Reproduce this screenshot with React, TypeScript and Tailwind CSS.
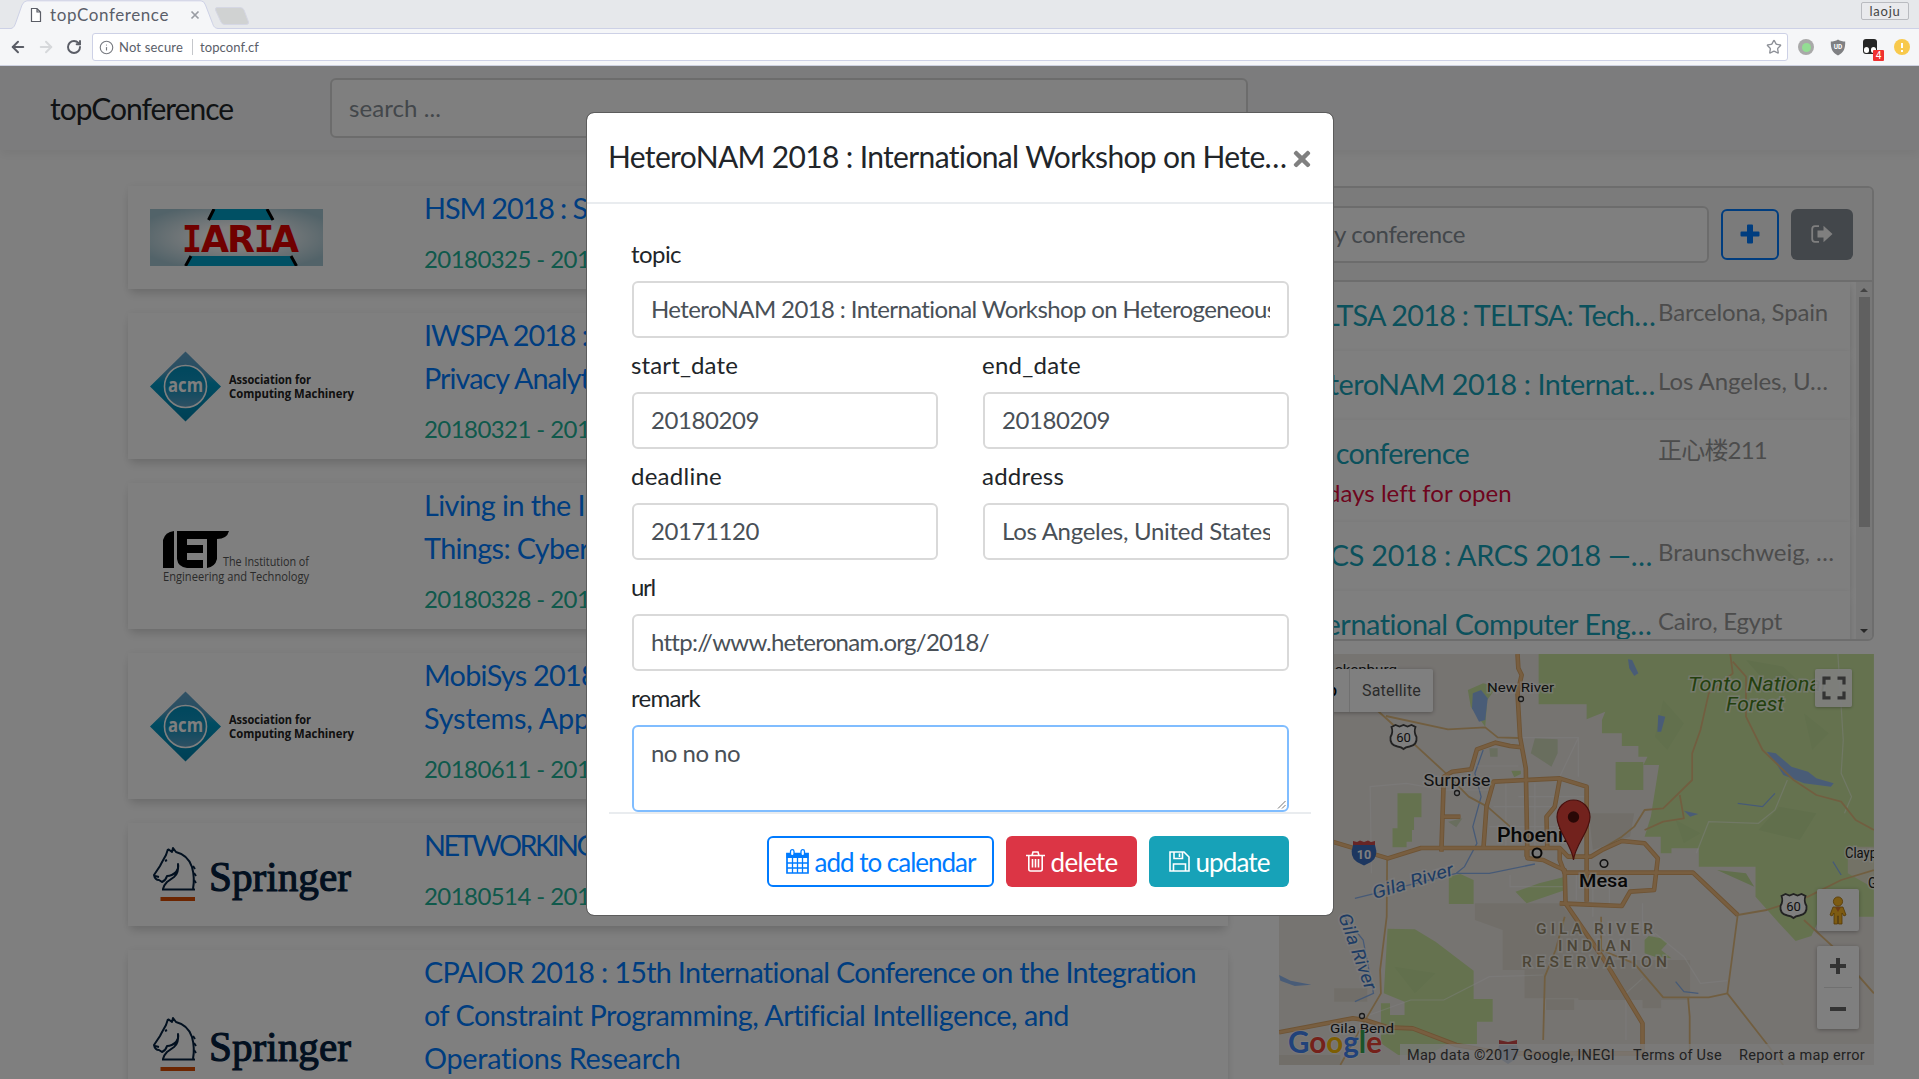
import { useLayoutEffect, useRef, useState, type ReactNode } from "react";
import { FaTimes } from "react-icons/fa";
import { ArrowLeft, ArrowRight, RotateCw, Star, Info } from "lucide-react";

/** One line of text whose letter spacing is adjusted to span a given width. */
function Fit({ w, children, className = "" }: { w: number; children: string; className?: string }) {
  const ref = useRef<HTMLSpanElement>(null);
  const [spacing, setSpacing] = useState(0);
  useLayoutEffect(() => {
    if (!ref.current) return;
    const natural = ref.current.getBoundingClientRect().width;
    setSpacing((w - natural) / children.length);
  }, [w, children]);
  return (
    <span ref={ref} className={"inline-block whitespace-pre " + className} style={{ letterSpacing: spacing }}>
      {children}
    </span>
  );
}

/* ---------- Browser chrome ---------- */

function TabStrip() {
  return (
    <div className="relative flex h-[29px] items-start border-b border-[#cdd1e6] bg-[#e6e8eb]">
      <svg className="absolute left-0 top-0" width="260" height="29" viewBox="0 0 260 29">
        <path d="M11 28.5 C14 28 15 25 16 22 L22 5 Q24 0.8 27 0.8 H201 Q204 0.8 205.500 5 L212 22 C213.500 26 214 28 218 28.5 V29 H11Z" fill="#f5f6f8" />
        <path d="M11 28.500 C14 28 15 25 16 22 L22 5 Q24 0.8 27 0.8 H201 Q204 0.8 205.500 5 L212 22 C213.500 26 214 28 218 28.5" fill="none" stroke="#cdd1e6" />
        <path d="M217 7.500 H240 Q243 7.500 244 10 L248.500 22 Q249 24.500 246 24.500 H225 Q222 24.500 221 22 L215.500 10 Q215 7.500 217 7.500Z" fill="#d0d2d2" stroke="#d5d7e4" />
        <path d="M31.500 8.500 H37 L40.500 12 V21.500 H31.500Z M37 8.500 V12 H40.500" fill="#fff" stroke="#5a5d66" strokeWidth="1.200" />
        <path d="M191.500 11.500 L198.500 18.500 M198.500 11.500 L191.500 18.500" stroke="#999ca3" strokeWidth="1.700" />
      </svg>
      <div className="relative ml-[50px] mt-[4px] text-[17px] leading-[22px] text-[#5a5e69]">
        <Fit w={119}>topConference</Fit>
      </div>
      <div className="ml-auto mr-[10px] mt-[2px] flex h-[18px] w-[48px] items-center justify-center rounded-[2px] border border-[#b9bbc0] bg-[#e9eaed] pt-px text-[13px] leading-none text-[#444]">
        <Fit w={31}>laoju</Fit>
      </div>
    </div>
  );
}

function Toolbar() {
  return (
    <div className="flex h-[37px] items-center border-b border-[#cdd1e0] bg-[#f5f6f8] pl-[9px]">
      <ArrowLeft size={18} strokeWidth={2.600} color="#5a5d66" />
      <ArrowRight size={18} strokeWidth={2.600} color="#d6d8db" className="ml-[10px]" />
      <RotateCw size={16} strokeWidth={2.900} color="#5a5d66" className="ml-[11px]" />
      <div className="ml-[10px] flex h-[28px] w-[1696px] items-center rounded-[3px] border border-[#cdd1e6] bg-white pl-[6px] text-[13px] text-[#5a5e69]">
        <Info size={15} strokeWidth={1.800} color="#777a80" />
        <Fit w={64} className="ml-[5px] mt-px">Not secure</Fit>
        <span className="ml-[9px] mr-[7px] h-[16px] w-px bg-[#c5c7cb]" />
        <Fit w={59} className="mt-px">topconf.cf</Fit>
        <Star size={16} strokeWidth={2} color="#8d9097" className="ml-auto mr-[5px]" />
      </div>
      <div className="ml-[10px] flex h-[16px] w-[16px] items-center justify-center rounded-full bg-[#a9a9a9]">
        <div className="h-[9px] w-[9px] rounded-full bg-[#93dd93]" />
      </div>
      <svg className="ml-[16px]" width="16" height="17" viewBox="0 0 16 17">
        <path d="M8 0.500 C10 2 13 2.600 15.200 2.600 C15.400 9 14 14 8 16.500 C2 14 0.600 9 0.800 2.600 C3 2.600 6 2 8 0.500Z" fill="#7f8083" />
        <text x="8" y="10" fontSize="6.500" fontWeight="700" fill="#fff" textAnchor="middle" fontFamily="Roboto">UD</text>
      </svg>
      <div className="relative ml-[16px] h-[16px] w-[16px]">
        <div className="ml-[1px] h-[15px] w-[14px] rounded-[3px] bg-[#262626]" />
        <div className="absolute left-[2px] top-[8px] h-[6px] w-[5px] rounded-full bg-white" />
        <div className="absolute left-[9px] top-[8px] h-[6px] w-[5px] rounded-full bg-white" />
        <div className="absolute left-[11px] top-[11px] flex h-[11px] w-[11px] items-center justify-center rounded-[1px] bg-[#f03030] font-[Roboto] text-[10px] leading-none text-white">4</div>
      </div>
      <div className="ml-[16px] flex h-[16px] w-[16px] flex-col items-center justify-center gap-[2px] rounded-full bg-[#f8c94c]">
        <div className="h-[5px] w-[2px] bg-white" />
        <div className="h-[2px] w-[2px] bg-white" />
      </div>
    </div>
  );
}

/* ---------- Publisher logos ---------- */

function IariaLogo() {
  return (
    <svg width="173" height="57" viewBox="0 0 173 57">
      <defs>
        <radialGradient id="iaria" cx="50%" cy="50%" r="60%">
          <stop offset="0.300" stopColor="#fff" />
          <stop offset="1" stopColor="#a5c6d2" />
        </radialGradient>
      </defs>
      <rect width="173" height="57" fill="url(#iaria)" />
      <path d="M64 0 H118 L124 11 H58Z" fill="#00a0c8" />
      <path d="M64 0 L58.500 11 M117 0 L123 11" stroke="#000" strokeWidth="3" />
      <path d="M42 47 H140 L146 57 H36Z" fill="#00a0c8" />
      <path d="M41 47 L35.500 57 M141 47 L146.500 57" stroke="#000" strokeWidth="3" />
      <g fontFamily="DejaVu Sans, sans-serif" fontWeight="700" fontSize="37" fill="#e00000">
        <text x="32" y="43" fontFamily="DejaVu Sans Mono, monospace" textLength="20" lengthAdjust="spacingAndGlyphs">I</text>
        <text x="51" y="43" textLength="28" lengthAdjust="spacingAndGlyphs">A</text>
        <text x="77" y="43" textLength="28" lengthAdjust="spacingAndGlyphs">R</text>
        <text x="104" y="43" fontFamily="DejaVu Sans Mono, monospace" textLength="20" lengthAdjust="spacingAndGlyphs">I</text>
        <text x="121" y="43" textLength="28" lengthAdjust="spacingAndGlyphs">A</text>
      </g>
    </svg>
  );
}

function AcmLogo() {
  return (
    <svg width="205" height="71" viewBox="0 0 205 71">
      <defs>
        <linearGradient id="acm" x1="0" y1="0" x2="0" y2="1">
          <stop offset="0" stopColor="#62a3ca" />
          <stop offset="0.300" stopColor="#4f9cc4" />
          <stop offset="0.450" stopColor="#0098c4" />
          <stop offset="1" stopColor="#0080aa" />
        </linearGradient>
        <linearGradient id="acmc" x1="0" y1="0" x2="0" y2="1">
          <stop offset="0" stopColor="#008fbc" />
          <stop offset="0.500" stopColor="#1294c0" />
          <stop offset="1" stopColor="#60a2c8" />
        </linearGradient>
      </defs>
      <path d="M35.500 0.500 L71 35.500 L35.500 70.500 L0 35.500Z" fill="url(#acm)" />
      <circle cx="35.500" cy="35.500" r="21" fill="url(#acmc)" stroke="#fff" strokeWidth="1.600" />
      <text x="18" y="40.500" fontFamily="Open Sans, sans-serif" fontWeight="700" fontSize="19" textLength="35" lengthAdjust="spacingAndGlyphs" fill="#fff">acm</text>
      <g fontFamily="Open Sans, sans-serif" fontWeight="700" fontSize="12.500" fill="#222">
        <text x="79" y="32.500" textLength="82" lengthAdjust="spacingAndGlyphs">Association for</text>
        <text x="79" y="47" textLength="125" lengthAdjust="spacingAndGlyphs">Computing Machinery</text>
      </g>
    </svg>
  );
}

function IetLogo() {
  return (
    <svg width="173" height="57" viewBox="0 0 173 57">
      <path d="M13 40 V12 Q15 4 24 3 V40Z" fill="#000" />
      <path d="M27 3 H79 Q77 11 67 11 V31 Q65 39 57 40 V11 H37 V17 H53 V25 H37 V32 H53 V40 H37 Q28 39 27 31Z" fill="#000" />
      <g fontFamily="Open Sans, sans-serif" fontSize="12" fill="#555">
        <text x="73" y="38" textLength="86" lengthAdjust="spacingAndGlyphs">The Institution of</text>
        <text x="13" y="53" textLength="146" lengthAdjust="spacingAndGlyphs">Engineering and Technology</text>
      </g>
    </svg>
  );
}

function SpringerLogo() {
  return (
    <svg width="205" height="58" viewBox="0 0 205 58">
      <g fill="none" stroke="#04203f" strokeWidth="2" strokeLinejoin="round">
        <path d="M18 3 L16 9 Q12 16 10 20 L4 29 Q5 34 9 34 L12 36 Q16 34 17 30 Q22 30 26 26 Q29 22 28 18 Q29 27 24 31 L17 36 Q14 39 13 43 M18 3 L22 6 L23 2 L26 6 Q38 9 42 21 Q45 32 43 43" />
        <path d="M12 43.500 H45" />
        <path d="M5 30 L9 31 M15 15 L17 14" />
      </g>
      <path d="M43 20 L45 23 M44 27 L46 30 M44 34 L46 37" stroke="#04203f" strokeWidth="2" />
      <rect x="10.500" y="51" width="34.500" height="4" fill="#d84a00" />
      <text x="59" y="44.500" fontFamily="Liberation Serif, serif" fontSize="43" textLength="142" lengthAdjust="spacingAndGlyphs" fill="#04203f" stroke="#04203f" strokeWidth="1.100">Springer</text>
    </svg>
  );
}

/* ---------- Conference list ---------- */

type Line = [text: string, width: number];

function ConferenceCard({ logo, lines, date }: { logo: ReactNode; lines: Line[]; date: string }) {
  return (
    <article className="flex shrink-0 bg-white pb-[12px] shadow-[0_7px_9px_-2px_rgba(0,0,0,0.13),0_0_8px_rgba(0,0,0,0.06)]">
      <div className="flex w-[296px] items-center pl-[22px] pt-[12px]">{logo}</div>
      <div>
        <h2 className="pt-px text-[28.800px] leading-[43px] text-[#007bff]">
          {lines.map(([text, width]) => (
            <div key={text} className="h-[43px]">
              <Fit w={width}>{text}</Fit>
            </div>
          ))}
        </h2>
        <p className="mt-[11px] text-[24px] leading-[36px] text-[#20b297]">
          <Fit w={233}>{date}</Fit>
        </p>
      </div>
    </article>
  );
}

function ConferenceList() {
  return (
    <div className="flex w-[1100px] flex-col gap-6">
      <ConferenceCard logo={<IariaLogo />} lines={[["HSM 2018 : S", 163]]} date="20180325 - 20180329" />
      <ConferenceCard logo={<AcmLogo />} lines={[["IWSPA 2018 :", 164], ["Privacy Analyt", 166]]} date="20180321 - 20180321" />
      <ConferenceCard logo={<IetLogo />} lines={[["Living in the I", 161], ["Things: Cyber", 165]]} date="20180328 - 20180329" />
      <ConferenceCard logo={<AcmLogo />} lines={[["MobiSys 2018", 173], ["Systems, App", 166]]} date="20180611 - 20180615" />
      <ConferenceCard logo={<SpringerLogo />} lines={[["NETWORKING", 171]]} date="20180514 - 20180516" />
      <ConferenceCard
        logo={<SpringerLogo />}
        lines={[
          ["CPAIOR 2018 : 15th International Conference on the Integration", 773],
          ["of Constraint Programming, Artificial Intelligence, and", 645],
          ["Operations Research", 257],
        ]}
        date="20180626 - 20180629"
      />
    </div>
  );
}

/* ---------- My conferences ---------- */

function MyItem({ title, place, note, height }: { title: Line; place: Line; note?: Line; height: string }) {
  return (
    <li className={"flex w-[569px] shrink-0 bg-white pl-[12px] pt-[12px] shadow-[0_5px_8px_-1px_rgba(0,0,0,0.14),0_0_6px_rgba(0,0,0,0.05)] " + height}>
      <div className="w-[365px]">
        <div className="text-[28.800px] leading-[43px] text-[#17a2b8]">
          <Fit w={title[1]}>{title[0]}</Fit>
        </div>
        {note && (
          <div className="text-[24px] leading-[36px] text-[#dc0a3c]">
            <Fit w={note[1]}>{note[0]}</Fit>
          </div>
        )}
      </div>
      <div className="text-[24px] leading-[36px] text-[#999]">
        <Fit w={place[1]}>{place[0]}</Fit>
      </div>
    </li>
  );
}

function MyConferences() {
  return (
    <section className="flex h-[455px] flex-col overflow-hidden rounded-[6px] border-2 border-[#dadada] bg-white">
      <div className="flex h-[94px] shrink-0 items-center gap-3 border-b-2 border-[#dadada] bg-[#f7f7f7] px-[19px]">
        <div className="flex h-[57px] flex-1 items-center rounded-[6px] border-2 border-[#d9d9d9] bg-white pl-[13px] text-[24px] text-[#868e96]">
          <Fit w={150}>my conference</Fit>
        </div>
        <button className="flex h-[51px] w-[58px] items-center justify-center rounded-[6px] border-2 border-[#007bff] text-[#007bff]">
          <svg width="20" height="20" viewBox="0 0 20 20">
            <path d="M8 0.500 H12 Q13 0.500 13 1.500 V7.500 H18.500 Q19.500 7.500 19.500 8.500 V11.500 Q19.500 12.500 18.500 12.500 H13 V18.500 Q13 19.500 12 19.500 H8 Q7 19.500 7 18.500 V12.500 H1.500 Q0.500 12.500 0.500 11.500 V8.500 Q0.500 7.500 1.500 7.500 H7 V1.500 Q7 0.500 8 0.500Z" fill="currentColor" />
          </svg>
        </button>
        <button className="flex h-[51px] w-[62px] items-center justify-center rounded-[6px] bg-[#868e96] text-white">
          <svg width="22" height="18" viewBox="0 0 22 18">
            <path d="M8 1.200 H4 Q1.200 1.200 1.200 4 V14 Q1.200 16.800 4 16.800 H8" fill="none" stroke="currentColor" strokeWidth="1.800" />
            <path d="M12.500 0.800 L21.500 9 L12.500 17.200 V12.500 H6.500 V5.500 H12.500Z" fill="currentColor" />
          </svg>
        </button>
      </div>
      <div className="flex flex-1 justify-between overflow-hidden">
        <ul className="flex flex-col">
          <MyItem height="h-[69px]" title={["TELTSA 2018 : TELTSA: Tech…", 362]} place={["Barcelona, Spain", 170]} />
          <MyItem height="h-[69px]" title={["HeteroNAM 2018 : Internat…", 362]} place={["Los Angeles, U…", 170]} />
          <MyItem height="h-[102px]" title={["my conference", 176]} note={["66 days left for open", 218]} place={["正心楼211", 109]} />
          <MyItem height="h-[69px]" title={["ARCS 2018 : ARCS 2018 —…", 359]} place={["Braunschweig, …", 176]} />
          <MyItem height="h-[69px]" title={["International Computer Eng…", 359]} place={["Cairo, Egypt", 124]} />
        </ul>
        <div className="flex w-[16px] flex-col items-center bg-[#f1f1f1]">
          <div className="mt-[6px] h-0 w-0 border-x-[4px] border-b-[4px] border-x-transparent border-b-[#888]" />
          <div className="mt-[5px] h-[230px] w-[11px] bg-[#c1c1c1]" />
          <div className="mb-[6px] mt-auto h-0 w-0 border-x-[4px] border-t-[4px] border-x-transparent border-t-[#505050]" />
        </div>
      </div>
    </section>
  );
}

/* ---------- Map ---------- */

const majorRoads = [
  "M598 42 L600 85 L608 105 L598 160 L604 290 L618 385 L622 655 L660 660 L690 678 L712 690 L714 790 L805 955 L900 1150 V1240",
  "M110 590 L285 655 L365 624 H700 L720 650 H775 L805 628 L850 603 L905 610 L937 655 L928 750 L870 755 L850 798 L700 790",
  "M608 322 L580 318 L545 308 L500 328 L486 388 L440 395 L420 410 L414 635",
  "M414 530 H460",
  "M516 620 L523 500 L540 425 L700 415 L765 440 V785",
  "M700 418 L688 500 L668 530 L670 625",
  "M620 650 V625",
  "M700 625 V660 L712 700",
  "M712 698 H1022 L1130 825",
  "M22 1177 L200 1135 L230 1140 L285 1162 L345 1165 L450 1215 L560 1240 H900",
];
const minorRoads = [
  "M150 90 L285 240 L425 400 L480 470 L525 500 L580 560",
  "M280 228 L430 268 L520 262 L550 292 L600 294",
  "M283 655 L282 830 L266 990 L268 1060 L235 1130 L170 1275",
  "M1112 42 L1118 100 L1060 160 L1040 270 L1020 340 V420 L950 505 L905 510 L880 560 L850 590 L800 628",
  "M1118 65 L1150 110 V230 L1190 330 L1265 420 L1320 465 L1380 485 L1415 540 L1459 570",
  "M1130 825 L1200 810 L1300 770 L1380 720 L1459 690",
  "M1130 825 L1105 1060 L1240 1275",
  "M712 830 L690 930 L664 1010 L660 1200",
  "M800 830 V930 L880 970 L950 1072 H1060 L1105 1060",
  "M1010 1072 L1014 1130 V1240",
  "M1290 840 L1360 920 L1459 1060",
  "M905 570 L950 545 L1000 535 L990 465",
];
const localRoads = [
  "M245 700 L242 440 L330 430 L420 450 H540",
  "M500 378 H600 M608 293 H745 V410 M745 293 L700 410 M640 430 V620 M570 425 V620 M540 500 H690 M530 560 H690 M600 470 H760",
  "M240 1125 L340 1080 L420 1080 L530 1010 L660 1005",
  "M1372 42 L1385 300 L1380 400 L1405 470 L1388 520",
  "M1250 420 L1220 510 L1180 550 L1060 545 L1030 640",
  "M580 705 V740 H710 M740 690 V780 M780 700 V830 M820 700 V790 M900 790 V880",
  "M930 880 L1000 950 L1040 1030 L1105 1022 M860 1200 V1060 L900 1015",
];

function Label({ x, y, size, w, children, weight = 400, fill = "#222", spread = false }: { x: number; y: number; size: number; w: number; children: string; weight?: number; fill?: string; spread?: boolean }) {
  return (
    <text x={x} y={y} fontSize={size} fontWeight={weight} textLength={w} lengthAdjust={spread ? "spacing" : "spacingAndGlyphs"} fill={fill} stroke="#fff" strokeOpacity="0.600" strokeWidth="3" paintOrder="stroke">
      {children}
    </text>
  );
}

function UsShield({ x, y }: { x: number; y: number }) {
  return (
    <g transform={`translate(${x} ${y})`}>
      <path d="M-12 -10 L-8 -12 L-4 -10.500 L0 -12 L4 -10.500 L8 -12 L12 -10 Q10 -5 13 0 Q14 8 6 9.500 Q2 10 0 12 Q-2 10 -6 9.500 Q-14 8 -13 0 Q-10 -5 -12 -10Z" fill="#fff" stroke="#444" strokeWidth="1.800" />
      <text y="4.500" fontSize="13" textAnchor="middle" fill="#222">60</text>
    </g>
  );
}

function MapDrawing() {
  return (
    <svg className="block" width="595" height="411" viewBox="1279 654 595 411" fontFamily="Roboto, sans-serif">
      <rect x="1279" y="654" width="595" height="411" fill="#ede8e3" />
      <g transform="translate(1270 640) scale(0.4139 0.33333)">
        <g fill="#e2ddd2">
          <path d="M495 790 H700 L830 960 H1015 V1080 H745 V1075 H615 V990 H562 V870 L495 840Z M770 520 L880 520 L870 590 L780 630Z" />
          <path d="M155 1045 H235 V1085 H155Z M22 1245 H170 V1275 H22Z M667 1078 H735 V1110 H667Z M900 1065 H945 V1105 H900Z" />
        </g>
        <g fill="#cae59f">
          <path d="M649 42 H1459 V830 H1330 L1308 888 L1270 903 L1230 850 L1173 770 V680 H1036 V625 H970 V640 H944 V590 H905 L920 530 L940 375 H902 L912 350 H890 V318 H850 V280 H802 V240 L810 215 L765 238 V193 H649Z" />
          <path d="M835 366 H902 V450 H835Z M308 460 H366 V532 H348 V570 H343 V605 H330 V622 H296 V565 H308Z" />
          <path d="M284 866 L350 868 L400 905 L492 992 V1077 H538 V1145 H500 V1212 H430 L380 1245 H310 L268 1210 V1090 H290 V1125 H325 V1085 L275 1060Z" />
          <path d="M432 710 L460 702 L492 720 V792 H432Z M593 755 L650 730 L708 712 V752 L620 790Z M583 392 H606 V402 L590 412Z" />
          <path d="M905 900 L915 888 L945 895 L960 910 L945 930 L970 955 L930 950 L905 940Z M478 150 L515 130 L548 140 L525 180 L520 260 L485 200Z" />
        </g>
        <path d="M1396 620 H1459 V745 L1396 700Z" fill="#e6e4cc" />
        <g fill="#d2dcbd">
          <path d="M640 295 L695 298 V340 L680 380 L630 340Z M530 325 H550 V350 H532Z M430 545 L465 535 L450 562Z" />
          <path d="M1150 60 L1240 80 L1300 150 L1200 130Z M1230 500 L1320 520 L1280 600 L1180 570Z M1080 690 L1150 700 L1170 740Z" fill="#c2de99" />
          <path d="M950 180 L1000 250 L960 330 L930 290Z M1290 220 L1350 280 L1310 330Z M980 540 L1040 580 L1000 610Z M300 980 L400 1000 L350 1060Z" fill="#c4e09a" />
        </g>
        <g fill="#93b9ef">
          <path d="M490 160 L510 150 L526 175 L520 240 L505 245 L488 205Z" />
          <path d="M1200 335 L1222 340 L1260 380 L1300 395 L1320 415 L1362 430 L1355 440 L1290 430 L1240 405 L1225 375Z" />
          <path d="M865 58 L875 60 L890 100 L880 108 L868 85Z M938 225 L955 230 L945 275 L936 275Z M22 1005 L50 1022 L100 1034 L60 1038 L25 1022Z M1000 512 L1035 522 L1015 530Z" />
        </g>
        <g fill="none" stroke="#8db4ee" strokeWidth="1.300">
          <path vectorEffect="non-scaling-stroke" d="M515 330 L495 400 L510 470 L490 560 L500 610 L470 680 L450 700 L205 775 M450 700 L530 700 L640 672 M1130 490 L1190 500 L1220 460 M180 830 L225 900 L250 1060 L205 1085 M980 1025 L1000 1055 L1035 1060 M1360 665 L1380 705" />
        </g>
        <g fill="none" stroke="#fff" strokeOpacity="0.450" strokeWidth="1.200">
          {localRoads.map((d) => <path key={d} d={d} vectorEffect="non-scaling-stroke" />)}
        </g>
        <g fill="none" strokeLinejoin="round">
          <g stroke="#e3bd80" strokeWidth="1.800">
            {minorRoads.map((d) => <path key={d} d={d} vectorEffect="non-scaling-stroke" />)}
          </g>
          <g stroke="#dca768" strokeWidth="4.600">
            {majorRoads.map((d) => <path key={d} d={d} vectorEffect="non-scaling-stroke" />)}
          </g>
          <g stroke="#f0bd80" strokeWidth="2.800">
            {majorRoads.map((d) => <path key={d} d={d} vectorEffect="non-scaling-stroke" />)}
          </g>
        </g>
      </g>

      <Label x={1331} y={674} size={13} w={66}>ickenburg</Label>
      <Label x={1487} y={692} size={13.500} w={67}>New River</Label>
      <Label x={1423.500} y={786} size={16} w={67}>Surprise</Label>
      <Label x={1497} y={842} size={21} w={77} weight={500} fill="#111">Phoenix</Label>
      <Label x={1579} y={887} size={18} w={49} weight={500} fill="#111">Mesa</Label>
      <Label x={1845} y={858} size={14} w={50}>Claypool</Label>
      <Label x={1868} y={888} size={14} w={35}>Globe</Label>
      <Label x={1330} y={1033} size={13} w={64}>Gila Bend</Label>
      <g fontStyle="italic" fontWeight="500">
        <Label x={1688} y={691} size={20} w={138} fill="#47801c">Tonto National</Label>
        <Label x={1726} y={711} size={20} w={58} fill="#47801c">Forest</Label>
      </g>
      <g fontWeight="500">
        <Label x={1536} y={934} size={15.500} w={117} weight={500} fill="#96896b" spread>GILA RIVER</Label>
        <Label x={1558} y={950.500} size={15.500} w={73} weight={500} fill="#96896b" spread>INDIAN</Label>
        <Label x={1522} y={967} size={15.500} w={145} weight={500} fill="#96896b" spread>RESERVATION</Label>
      </g>
      <g fontStyle="italic">
        <g transform="rotate(-17 1375 898)"><Label x={1374} y={899} size={18} w={84} fill="#3b78c9">Gila River</Label></g>
        <g transform="rotate(70 1340 915)"><Label x={1340} y={917} size={18} w={80} fill="#3b78c9">Gila River</Label></g>
      </g>
      <g fill="#eee" stroke="#333" strokeWidth="1.300">
        <circle cx="1521" cy="699" r="2.500" />
        <circle cx="1457" cy="793" r="2.500" />
        <circle cx="1362" cy="1016" r="2.500" />
        <circle cx="1537" cy="853" r="4.500" stroke="#111" strokeWidth="2" />
        <circle cx="1604" cy="863.500" r="3.800" stroke="#222" strokeWidth="1.600" />
      </g>
      <UsShield x={1403.500} y={737} />
      <UsShield x={1793.500} y={906} />
      <g>
        <path d="M1353 845 Q1349 857 1357 862 L1364 865.500 L1371 862 Q1379 857 1375 845Z" fill="#3b6fc0" />
        <path d="M1353 845 V841 L1357 842 L1360 840.500 L1364 842 L1368 840.500 L1371 842 L1375 841 V845Z" fill="#cf4a4a" />
        <text x="1364" y="859" fontSize="12.500" fontWeight="700" textAnchor="middle" fill="#fff">10</text>
      </g>
      <g>
        <path d="M1499 1045 Q1496 1056 1502 1060 L1508 1064 L1514 1060 Q1520 1056 1517 1045Z" fill="#6f8fc8" />
        <path d="M1499 1044 V1040 L1508 1042 L1517 1040 V1044Z" fill="#cf4a4a" />
      </g>
      <g>
        <path d="M1573.500 860 C1572 845 1557 831 1557 817 A16.500 17 0 0 1 1590 817 C1590 831 1575 845 1573.500 860Z" fill="#e5453b" stroke="#90201b" strokeWidth="1.200" />
        <ellipse cx="1573.500" cy="817" rx="5.700" ry="5.700" fill="#52100d" />
      </g>
      <text x="1288" y="1053" fontFamily="Lato, sans-serif" fontSize="31" textLength="94" lengthAdjust="spacingAndGlyphs" fontWeight="700" stroke="#fff" strokeOpacity="0.500" strokeWidth="2" paintOrder="stroke">
        <tspan fill="#4285f4">G</tspan>
        <tspan fill="#ea4335">o</tspan>
        <tspan fill="#fbbc05">o</tspan>
        <tspan fill="#4285f4">g</tspan>
        <tspan fill="#34a853">l</tspan>
        <tspan fill="#ea4335">e</tspan>
      </text>
    </svg>
  );
}

function MapPanel() {
  return (
    <section className="relative mt-[13px] h-[411px] w-[595px] overflow-hidden font-[Roboto]">
      <MapDrawing />
      <div className="absolute left-[15px] top-[15px] flex h-[43px] w-[139px] items-center rounded-[2px] bg-white text-[16px] text-[#565656] shadow-[0_1px_4px_rgba(0,0,0,0.3)]">
        <span className="flex h-full w-[56px] items-center justify-end border-r border-[#e0e0e0] pr-[12px] font-medium text-black">Map</span>
        <span className="pl-[12px]"><Fit w={59}>Satellite</Fit></span>
      </div>
      <div className="absolute right-[22px] top-[15px] flex h-[38px] w-[37px] items-center justify-center rounded-[2px] bg-white/90 shadow-[0_1px_3px_rgba(0,0,0,0.25)]">
        <svg width="24" height="24" viewBox="0 0 24 24" fill="none" stroke="#666" strokeWidth="3.200">
          <path d="M2 8.500 V2.200 H8.500 M15.500 2.200 H22 V8.500 M22 15.500 V21.800 H15.500 M8.500 21.800 H2 V15.500" />
        </svg>
      </div>
      <div className="absolute bottom-[134px] right-[15px] flex h-[42px] w-[42px] items-center justify-center rounded-[2px] bg-white shadow-[0_1px_4px_rgba(0,0,0,0.3)]">
        <svg width="18" height="29" viewBox="0 0 18 29">
          <path d="M4 11 H14 L17 19 L15 20 L13 17 V28 H9.500 V20 H8.500 V28 H5 V17 L3 20 L1 19Z" fill="#fbb724" stroke="#a8700a" strokeWidth="0.800" />
          <circle cx="9" cy="5.500" r="4.600" fill="#fbb724" stroke="#a8700a" strokeWidth="0.800" />
          <path d="M6 11 H12 L9 16Z" fill="#d9772a" />
        </svg>
      </div>
      <div className="absolute bottom-[36px] right-[15px] flex h-[83px] w-[42px] flex-col items-center justify-between rounded-[2px] bg-white py-[12px] shadow-[0_1px_4px_rgba(0,0,0,0.3)]">
        <svg width="16" height="16" viewBox="0 0 16 16"><path d="M6 0 H10 V6 H16 V10 H10 V16 H6 V10 H0 V6 H6Z" fill="#666" /></svg>
        <div className="h-px w-[28px] bg-[#e0e0e0]" />
        <svg width="16" height="16" viewBox="0 0 16 16"><path d="M0 6 H16 V10 H0Z" fill="#666" /></svg>
      </div>
      <div className="absolute bottom-0 right-0 flex h-[21px] w-[474px] items-center bg-[#f5f5f5]/75 pl-[7px] pt-[3px] text-[14.500px] leading-none text-[#444]">
        <Fit w={208}>Map data ©2017 Google, INEGI</Fit>
        <Fit w={89} className="ml-[18px]">Terms of Use</Fit>
        <Fit w={126} className="ml-[17px]">Report a map error</Fit>
      </div>
    </section>
  );
}

/* ---------- Edit dialog ---------- */

function Field({ label, labelWidth, value, valueWidth, className = "" }: { label: string; labelWidth: number; value: string; valueWidth: number; className?: string }) {
  return (
    <div className={"h-[111px] " + className}>
      <div className="-ml-px text-[24px] leading-[36px] text-[#212529]">
        <Fit w={labelWidth}>{label}</Fit>
      </div>
      <div className="mt-[9px] flex h-[57px] items-center rounded-[6px] border-2 border-[#d9d9d9] bg-white px-[17px] text-[24px] leading-[36px] text-[#495057]">
        <div className="-mt-px w-full overflow-hidden">
          <Fit w={valueWidth}>{value}</Fit>
        </div>
      </div>
    </div>
  );
}

function EditDialog() {
  return (
    <div className="absolute left-[586px] top-[46px] flex h-[804px] w-[748px] flex-col rounded-[8px] border border-[#5c5c5c] bg-white bg-clip-padding">
      <div className="flex h-[91px] shrink-0 items-center justify-between border-b-2 border-[#e9ecef] pl-[21px] pr-[22px]">
        <h1 className="-mt-[2px] text-[30px] leading-[45px] text-[#212529]">
          <Fit w={679}>HeteroNAM 2018 : International Workshop on Hete…</Fit>
        </h1>
        <FaTimes size={24} color="#808080" className="-mr-[3px] mt-[2px]" />
      </div>
      <div className="mt-[32px] grid grid-cols-2 gap-x-[45px] pl-[45px] pr-[44px]">
        <Field className="col-span-2" label="topic" labelWidth={50} value="HeteroNAM 2018 : International Workshop on Heterogeneous" valueWidth={626} />
        <Field label="start_date" labelWidth={107} value="20180209" valueWidth={108} />
        <Field label="end_date" labelWidth={99} value="20180209" valueWidth={108} />
        <Field label="deadline" labelWidth={91} value="20171120" valueWidth={108} />
        <Field label="address" labelWidth={82} value="Los Angeles, United States" valueWidth={270} />
        <Field className="col-span-2" label="url" labelWidth={24} value="http://www.heteronam.org/2018/" valueWidth={337} />
        <div className="col-span-2">
          <div className="-ml-px text-[24px] leading-[36px] text-[#212529]">
            <Fit w={69}>remark</Fit>
          </div>
          <div className="relative mt-[9px] h-[87px] rounded-[6px] border-2 border-[#80bdff] bg-white px-[17px] pt-[8px] text-[24px] leading-[36px] text-[#495057]">
            <Fit w={89}>no no no</Fit>
            <svg className="absolute bottom-[1px] right-[1px]" width="9" height="9" viewBox="0 0 9 9" stroke="#666" strokeWidth="0.900">
              <path d="M1 8.500 L8.500 1 M5 8.500 L8.500 5" />
            </svg>
          </div>
        </div>
      </div>
      <div className="mx-[22px] flex justify-end gap-[12px] border-t-2 border-[#e9ecef] pr-[22px] pt-[22px] text-[26px]">
        <button className="flex h-[51px] w-[227px] items-center justify-center gap-[6px] rounded-[6px] border-2 border-[#007bff] leading-none text-[#007bff]">
          <svg width="23" height="25" viewBox="0 0 23 25">
            <path d="M1 4.500 H22 V24 H1Z" fill="none" stroke="currentColor" strokeWidth="1.700" />
            <path d="M0.500 4 H22.500 V9 H0.500Z" fill="currentColor" />
            <path d="M1 14 H22 M1 19 H22 M6.500 9 V24 M11.500 9 V24 M16.500 9 V24" stroke="currentColor" strokeWidth="1.300" />
            <rect x="4.500" y="0.700" width="3.500" height="6" rx="1.700" fill="#fff" stroke="currentColor" strokeWidth="1.300" />
            <rect x="15" y="0.700" width="3.500" height="6" rx="1.700" fill="#fff" stroke="currentColor" strokeWidth="1.300" />
          </svg>
          <Fit w={161}>add to calendar</Fit>
        </button>
        <button className="flex h-[51px] w-[131px] items-center justify-center gap-[6px] rounded-[6px] bg-[#dc3545] leading-none text-white">
          <svg width="19" height="21" viewBox="0 0 19 21" fill="none" stroke="currentColor" strokeWidth="1.600">
            <path d="M0 4.500 H19 M6 4.500 L7 1 H12 L13 4.500 M2.800 4.500 V18 Q2.800 20 4.500 20 H14.500 Q16.200 20 16.200 18 V4.500 M6.500 8 V16.500 M9.500 8 V16.500 M12.500 8 V16.500" />
          </svg>
          <Fit w={67}>delete</Fit>
        </button>
        <button className="flex h-[51px] w-[140px] items-center justify-center gap-[6px] rounded-[6px] bg-[#17a2b8] leading-none text-white">
          <svg width="21" height="21" viewBox="0 0 21 21" fill="none" stroke="currentColor" strokeWidth="1.600">
            <path d="M1 1 H15 L20 6 V20 H1Z M5 1 V7.500 H13.500 V1 M4.500 20 V13 H16.500 V20 M10.500 2.500 V6" />
          </svg>
          <Fit w={74}>update</Fit>
        </button>
      </div>
    </div>
  );
}

export default function App() {
  return (
    <div className="h-[1079px] w-[1919px] overflow-hidden bg-white font-[Lato,'Noto_Sans_CJK_SC',sans-serif]">
      <TabStrip />
      <Toolbar />
      <div className="relative h-[1013px] overflow-hidden bg-white">
        <header className="flex h-[84px] items-center bg-[#f8f9fa] pl-[50px] shadow-[0_5px_9px_rgba(0,0,0,0.05)]">
          <div className="w-[280px] text-[30px] leading-[45px] text-[#212529]">
            <Fit w={183}>topConference</Fit>
          </div>
          <div className="flex h-[60px] w-[918px] items-center rounded-[6px] border-2 border-[#d9d9d9] bg-white pl-[17px] text-[24px] leading-[36px] text-[#868e96]">
            <Fit w={92}>search ...</Fit>
          </div>
        </header>
        <main className="flex items-start gap-[51px] pl-[128px] pt-[36px]">
          <ConferenceList />
          <div className="w-[595px]">
            <MyConferences />
            <MapPanel />
          </div>
        </main>
        <div className="absolute inset-0 bg-black/50" />
        <EditDialog />
      </div>
    </div>
  );
}
